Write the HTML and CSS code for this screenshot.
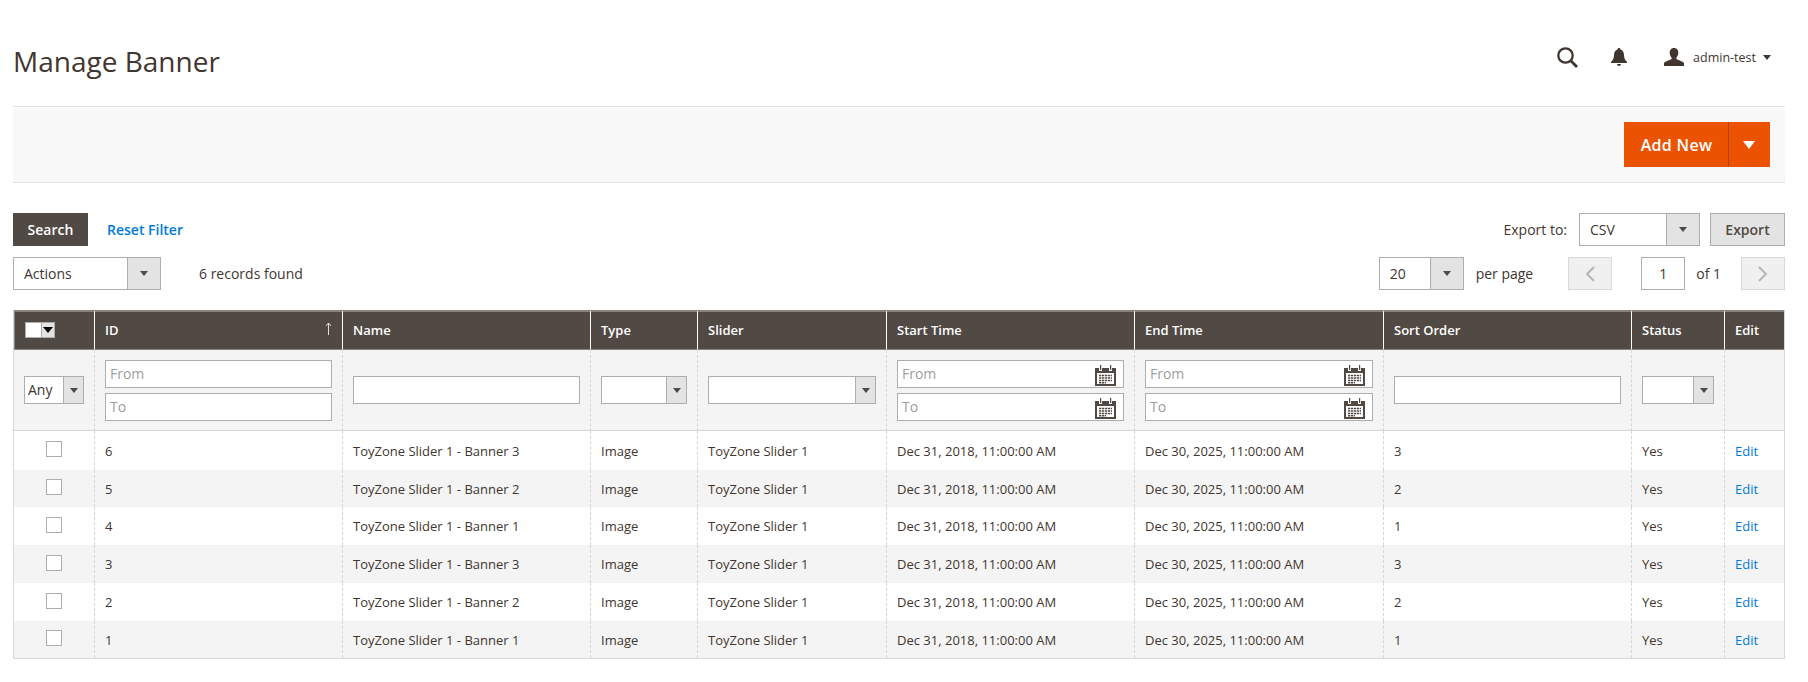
FILE: index.html
```html
<!DOCTYPE html>
<html lang="en">
<head>
<meta charset="utf-8">
<title>Manage Banner</title>
<link rel="stylesheet" href="styles.css">
</head>
<body>
<svg class="defs" width="0" height="0">
<symbol id="cal" viewBox="0 0 21 21">
<rect x="0" y="3" width="21" height="18" fill="#514943"/>
<rect x="2" y="8" width="17" height="11" fill="#fff"/>
<rect x="4" y="0" width="3" height="6" fill="#fff"/>
<rect x="14" y="0" width="3" height="6" fill="#fff"/>
<rect x="5" y="0" width="1.200" height="5" fill="#514943"/>
<rect x="15" y="0" width="1.200" height="5" fill="#514943"/>
<path d="M4 10.500h13M4 13h13M4 15.500h13M4 17.800h7" stroke="#514943" stroke-width="1.600" fill="none"/>
<path d="M6.500 9v10M9.500 9v10M12.500 9v10M15.500 9v10" stroke="#fff" stroke-width=".7" fill="none"/>
</symbol>
</svg>
<header class="top">
<h1 class="title">Manage Banner</h1>
<div class="actions-top">
<svg class="i-search" width="21" height="21" viewBox="0 0 21 21"><circle cx="8.500" cy="8.500" r="7.200" fill="none" stroke="#41362f" stroke-width="2.300"/><path d="M13.800 13.800L20 20" stroke="#41362f" stroke-width="2.800"/></svg>
<svg class="i-bell" width="16" height="18" viewBox="0 0 16 18"><path d="M8 0c1 0 1.500.7 1.500 1.400C12 2.200 13 4.500 13 7c0 3 1 5 3 7v1H0v-1c2-2 3-4 3-7 0-2.500 1-4.800 3.500-5.600C6.500.7 7 0 8 0z" fill="#41362f"/><path d="M6 16h4c0 1-1 2-2 2s-2-1-2-2z" fill="#41362f"/></svg>
<svg class="i-user" width="20" height="18" viewBox="0 0 20 18"><path d="M10 0c3 0 4.300 2.200 4.300 4.800 0 2-.7 3.700-1.800 4.700v1.800c3 1.200 6 2 7.500 3.700V18H0v-3c1.500-1.700 4.500-2.500 7.500-3.700V9.500C6.400 8.500 5.700 6.800 5.700 4.800 5.700 2.200 7 0 10 0z" fill="#41362f"/></svg>
<span class="user">admin-test</span>
<span class="caret-user"></span>
</div>
</header>
<section class="bar">
<div class="add">
<span class="add-label">Add New</span>
<span class="add-toggle"><i class="tri-white"></i></span>
</div>
</section>
<main class="grid-wrap">
<div class="row-a">
<div class="group">
<button class="btn-search">Search</button>
<a class="reset">Reset Filter</a>
</div>
<div class="group">
<span class="lbl exp-lbl">Export to:</span>
<div class="sel sel-csv"><span class="val">CSV</span><span class="arrow"><i class="tri"></i></span></div>
<button class="btn-export">Export</button>
</div>
</div>
<div class="row-b">
<div class="group">
<div class="sel sel-actions"><span class="val">Actions</span><span class="arrow"><i class="tri"></i></span></div>
<span class="lbl found">6 records found</span>
</div>
<div class="group">
<div class="sel sel-page"><span class="val">20</span><span class="arrow"><i class="tri"></i></span></div>
<span class="lbl perpage">per page</span>
<span class="pager"><svg width="10" height="16" viewBox="0 0 10 16"><path d="M9 1L2 8l7 7" fill="none" stroke="#b5b5b5" stroke-width="2"/></svg></span>
<span class="pageno">1</span>
<span class="lbl ofone">of 1</span>
<span class="pager"><svg width="10" height="16" viewBox="0 0 10 16"><path d="M1 1l7 7-7 7" fill="none" stroke="#b5b5b5" stroke-width="2"/></svg></span>
</div>
</div>
<table class="grid">
<colgroup>
<col class="c1"><col class="c2"><col class="c3"><col class="c4"><col class="c5"><col class="c6"><col class="c7"><col class="c8"><col class="c9"><col class="c10">
</colgroup>
<thead>
<tr class="head">
<th><span class="mass"><span class="mass-box"></span><span class="mass-arrow"><i class="tri-black"></i></span></span></th>
<th class="sort">ID<svg class="sort-arrow" width="7" height="13" viewBox="0 0 7 13"><path d="M3.500 13V1M1 4l2.500-3L6 4" fill="none" stroke="#e3dfc5" stroke-width="1"/></svg></th>
<th>Name</th><th>Type</th><th>Slider</th><th>Start Time</th><th>End Time</th><th>Sort Order</th><th>Status</th><th>Edit</th>
</tr>
<tr class="filters">
<td><div class="sel sel-any"><span class="val">Any</span><span class="arrow"><i class="tri"></i></span></div></td>
<td><div class="stack"><div class="inp ph">From</div><div class="inp ph">To</div></div></td>
<td><div class="inp"></div></td>
<td><div class="sel sel-blank"><span class="val"></span><span class="arrow"><i class="tri"></i></span></div></td>
<td><div class="sel sel-blank"><span class="val"></span><span class="arrow"><i class="tri"></i></span></div></td>
<td><div class="stack"><div class="inp ph date">From<svg class="cal"><use href="#cal"/></svg></div><div class="inp ph date">To<svg class="cal"><use href="#cal"/></svg></div></div></td>
<td><div class="stack"><div class="inp ph date">From<svg class="cal"><use href="#cal"/></svg></div><div class="inp ph date">To<svg class="cal"><use href="#cal"/></svg></div></div></td>
<td><div class="inp"></div></td>
<td><div class="sel sel-blank"><span class="val"></span><span class="arrow"><i class="tri"></i></span></div></td>
<td></td>
</tr>
</thead>
<tbody>
<tr><td><span class="check"></span></td><td>6</td><td>ToyZone Slider 1 - Banner 3</td><td>Image</td><td>ToyZone Slider 1</td><td>Dec 31, 2018, 11:00:00 AM</td><td>Dec 30, 2025, 11:00:00 AM</td><td>3</td><td>Yes</td><td><a class="edit">Edit</a></td></tr>
<tr class="alt"><td><span class="check"></span></td><td>5</td><td>ToyZone Slider 1 - Banner 2</td><td>Image</td><td>ToyZone Slider 1</td><td>Dec 31, 2018, 11:00:00 AM</td><td>Dec 30, 2025, 11:00:00 AM</td><td>2</td><td>Yes</td><td><a class="edit">Edit</a></td></tr>
<tr><td><span class="check"></span></td><td>4</td><td>ToyZone Slider 1 - Banner 1</td><td>Image</td><td>ToyZone Slider 1</td><td>Dec 31, 2018, 11:00:00 AM</td><td>Dec 30, 2025, 11:00:00 AM</td><td>1</td><td>Yes</td><td><a class="edit">Edit</a></td></tr>
<tr class="alt"><td><span class="check"></span></td><td>3</td><td>ToyZone Slider 1 - Banner 3</td><td>Image</td><td>ToyZone Slider 1</td><td>Dec 31, 2018, 11:00:00 AM</td><td>Dec 30, 2025, 11:00:00 AM</td><td>3</td><td>Yes</td><td><a class="edit">Edit</a></td></tr>
<tr><td><span class="check"></span></td><td>2</td><td>ToyZone Slider 1 - Banner 2</td><td>Image</td><td>ToyZone Slider 1</td><td>Dec 31, 2018, 11:00:00 AM</td><td>Dec 30, 2025, 11:00:00 AM</td><td>2</td><td>Yes</td><td><a class="edit">Edit</a></td></tr>
<tr class="alt"><td><span class="check"></span></td><td>1</td><td>ToyZone Slider 1 - Banner 1</td><td>Image</td><td>ToyZone Slider 1</td><td>Dec 31, 2018, 11:00:00 AM</td><td>Dec 30, 2025, 11:00:00 AM</td><td>1</td><td>Yes</td><td><a class="edit">Edit</a></td></tr>
</tbody>
</table>
</main>
</body>
</html>
```
FILE: styles.css
```css
* { box-sizing: border-box; }
html, body { margin: 0; padding: 0; background: #fff; }
body { font-family: "Open Sans", sans-serif; font-size: 14px; color: #41362f; width: 1808px; height: 682px; overflow: hidden; }
.defs { position: absolute; }
.top { display: flex; justify-content: space-between; align-items: center; height: 106px; padding: 16px 37px 0 13px; }
.title { margin: 0; font-size: 28px; font-weight: 400; line-height: 36px; color: #41362f; }
.actions-top { display: flex; align-items: center; padding-bottom: 8px; }
.i-search { margin-right: 33px; }
.i-bell { margin-right: 37px; }
.i-user { margin-right: 9px; }
.user { font-size: 12.500px; }
.caret-user { margin-left: 7px; border-left: 4px solid transparent; border-right: 4px solid transparent; border-top: 5px solid #41362f; }
.bar { margin: 0 0 0 13px; width: 1772px; height: 77px; background: #f8f8f8; border-top: 1px solid #e3e3e3; border-bottom: 1px solid #e3e3e3; display: flex; justify-content: flex-end; align-items: center; padding-right: 15px; }
.add { display: flex; width: 146px; height: 45px; background: #eb5202; color: #fff; font-weight: 600; font-size: 16px; }
.add-label { width: 105px; padding-left: 1px; display: flex; align-items: center; justify-content: center; letter-spacing: .3px; border-right: 1px solid #b84002; }
.add-toggle { flex: 1; padding-right: 1px; display: flex; align-items: center; justify-content: center; }
.tri-white { border-left: 6px solid transparent; border-right: 6px solid transparent; border-top: 8px solid #fff; }
.grid-wrap { padding: 30px 23px 0 13px; }
.row-a, .row-b { display: flex; justify-content: space-between; align-items: center; }
.row-a { height: 33px; }
.row-b { height: 33px; margin-top: 11px; }
.group { display: flex; align-items: center; }
.btn-search { width: 75px; height: 33px; background: #514943; color: #fff; border: 0; font: 600 14px "Open Sans", sans-serif; padding: 0; }
.reset { margin-left: 19px; color: #007bdb; font-weight: 600; font-size: 14px; }
.lbl { font-size: 14px; }
.exp-lbl { margin-right: 12px; }
.sel { display: flex; height: 33px; background: #fff; border: 1px solid #adadad; }
.val { flex: 1; padding-left: 10px; line-height: 31px; font-size: 14px; white-space: nowrap; }
.arrow { width: 33px; background: #e3e3e3; border-left: 1px solid #adadad; display: flex; align-items: center; justify-content: center; }
.tri { border-left: 4px solid transparent; border-right: 4px solid transparent; border-top: 5px solid #514943; }
.tri-black { border-left: 5px solid transparent; border-right: 5px solid transparent; border-top: 6px solid #000; }
.sel-csv { width: 121px; }
.sel-actions { width: 148px; }
.sel-page { width: 85px; }
.btn-export { width: 75px; height: 33px; margin-left: 10px; background: #e3e3e3; border: 1px solid #adadad; color: #514943; font: 600 14px "Open Sans", sans-serif; padding: 0; }
.found { margin-left: 38px; }
.perpage { margin-left: 12px; }
.pager { width: 44px; height: 33px; margin-left: 35px; display: flex; align-items: center; justify-content: center; background: #f0f0f0; border: 1px solid #d9d9d9; }
.pageno { width: 44px; height: 33px; margin-left: 29px; border: 1px solid #adadad; text-align: center; line-height: 31px; }
.ofone { margin-left: 11px; }
.ofone + .pager { margin-left: 20px; }
.grid { margin-top: 20px; width: 1772px; border-collapse: separate; border-spacing: 0; table-layout: fixed; font-size: 13px; border: 1px solid #d6d6d6; border-top: 0; }
.c1 { width: 80px; } .c2 { width: 248px; } .c3 { width: 248px; } .c4 { width: 107px; } .c5 { width: 189px; } .c6 { width: 248px; } .c7 { width: 249px; } .c8 { width: 248px; } .c9 { width: 93px; } .c10 { width: 60px; }
th { background: #514943; color: #fff; font-weight: 600; font-size: 13px; text-align: left; height: 40px; padding: 0 10px 1px; border-top: 2px solid #8a837e; border-bottom: 1px solid #8a837e; border-left: 1px solid #fff; position: relative; }
th:first-child { border-left: 1px solid #8a837e; }
.filters td { background: #f4f4f4; height: 81px; border-bottom: 1px solid #d6d6d6; padding: 0 10px; vertical-align: middle; }
td { border-left: 1px dashed #d6d6d6; padding: 0 10px; }
td:first-child { border-left: 0; }
tbody td { height: 38px; color: #41362f; }
tbody tr:first-child td { height: 39px; }
tbody tr:nth-child(2) td, tbody tr:last-child td { height: 37px; }
.alt td { background: #f4f4f4; }
.inp { height: 28px; width: 100%; background: #fff; border: 1px solid #adadad; font-size: 14px; line-height: 26px; padding-left: 4px; position: relative; }
.ph { color: #9e9e9e; }
.stack { display: flex; flex-direction: column; gap: 5px; }
.date .cal { position: absolute; right: 7px; top: 4px; width: 21px; height: 21px; }
.sel-any { height: 28px; width: 60px; }
.sel-any .val { padding-left: 3px; line-height: 26px; }
.sel-any .arrow, .sel-blank .arrow { width: 20px; }
.sel-blank { height: 28px; width: 100%; }
.filters td:nth-child(9) .sel-blank { width: 72px; }
.mass { display: flex; width: 30px; height: 16px; border: 1px solid #adadad; background: #fff; margin-top: -1px; }
.mass-box { width: 15px; }
.mass-arrow { flex: 1; background: #e3e3e3; border-left: 1px solid #adadad; display: flex; align-items: center; justify-content: center; }
.sort-arrow { position: absolute; right: 10px; top: 10px; }
.check { display: block; width: 16px; height: 16px; background: #fff; border: 1px solid #adadad; margin: -3px 0 0 22px; }
.edit { color: #007bdb; }
```
